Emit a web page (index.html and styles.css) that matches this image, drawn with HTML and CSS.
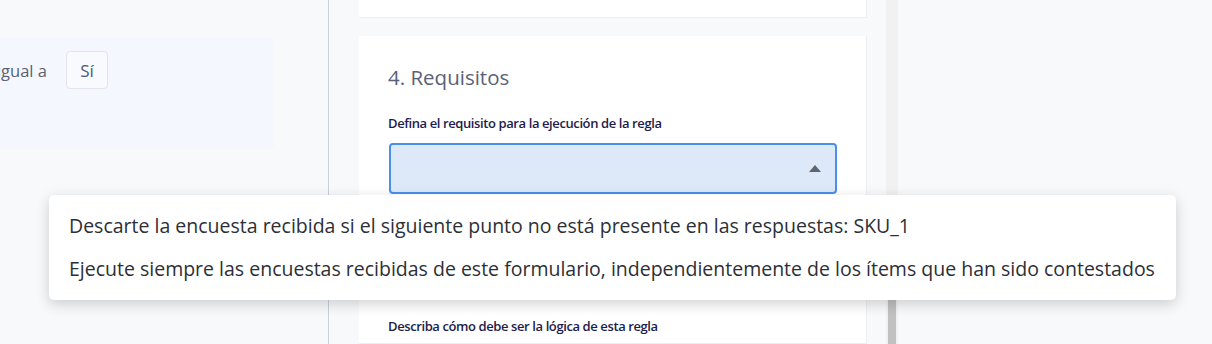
FILE: index.html
```html
<!DOCTYPE html>
<html lang="es">
<head>
<meta charset="utf-8">
<link rel="stylesheet" href="styles.css">
</head>
<body>
<div class="app">
  <aside class="side">
    <div class="cond">
      <div class="cond-row">
        <div class="cond-label"><span>La respuesta es igual a</span></div>
        <div class="chip">Sí</div>
      </div>
    </div>
  </aside>
  <main class="main">
    <section class="card card-prev"></section>
    <section class="card card-req">
      <h2 class="card-title">4. Requisitos</h2>
      <label class="field-label">Defina el requisito para la ejecución de la regla</label>
      <div class="select">
        <svg class="caret" width="12" height="7" viewBox="0 0 12 7"><path d="M0 7 L6 0 L12 7 Z" fill="#5f646d"/></svg>
      </div>
      <div class="spacer"></div>
      <label class="field-label">Describa cómo debe ser la lógica de esta regla</label>
    </section>
  </main>
  <div class="scrollbar"><div class="thumb"></div></div>
  <div class="rest"></div>
</div>
<ul class="menu">
  <li class="menu-item">Descarte la encuesta recibida si el siguiente punto no está presente en las respuestas: SKU_1</li>
  <li class="menu-item">Ejecute siempre las encuestas recibidas de este formulario, independientemente de los ítems que han sido contestados</li>
</ul>
</body>
</html>
```
FILE: styles.css
```css
* { box-sizing: border-box; }
html, body { margin: 0; padding: 0; }
body {
  width: 1212px;
  height: 344px;
  overflow: hidden;
  background: #f8f9fb;
  font-family: "Open Sans", "Noto Sans", sans-serif;
  position: relative;
}
.app {
  display: flex;
  height: 344px;
}
.side {
  width: 329px;
  flex: none;
  border-right: 1px solid #c9d0de;
  background: #f8f9fb;
  padding-top: 37px;
  overflow: hidden;
}
.cond {
  width: 274px;
  height: 112px;
  background: #f4f7fd;
  border-radius: 0 5px 5px 0;
  padding-top: 14px;
}
.cond-row {
  display: flex;
  align-items: center;
  gap: 19px;
}
.cond-label {
  width: 47px;
  display: flex;
  justify-content: flex-end;
  overflow: hidden;
  white-space: nowrap;
  font-size: 16.5px;
  color: #5b6172;
}
.cond-label span { flex: none; }
.chip {
  width: 42px;
  height: 38px;
  border: 1px solid #e1e4ea;
  border-radius: 4px;
  background: #f8fafd;
  display: flex;
  align-items: center;
  justify-content: center;
  font-size: 17px;
  color: #4e5878;
}
.main {
  width: 557px;
  flex: none;
  padding: 0 19px 0 30px;
  display: flex;
  flex-direction: column;
  gap: 18px;
}
.card {
  background: #fff;
  border-right: 1px solid #eceef1;
  border-bottom: 1px solid #eceef1;
}
.card-prev { height: 18px; }
.card-req {
  flex: 1;
  padding: 27px 29px 0 29px;
  display: flex;
  flex-direction: column;
}
.card-title {
  margin: 0;
  font-size: 20.5px;
  font-weight: 400;
  line-height: 28px;
  color: #5a6078;
}
.field-label {
  margin-top: 23px;
  font-size: 13px;
  font-weight: 600;
  letter-spacing: -0.4px;
  line-height: 18px;
  color: #1e1c4c;
}
.select {
  margin-top: 11px;
  margin-left: 1px;
  height: 51px;
  border: 2px solid #4a90e9;
  border-radius: 4px;
  background: #dde9f9;
  display: flex;
  align-items: center;
  justify-content: flex-end;
  padding-right: 14px;
}
.caret { display: block; margin-top: -1px; }
.spacer { height: 123px; }
.card-req .spacer + .field-label { margin-top: 0; }
.scrollbar {
  width: 12px;
  flex: none;
  background: #f1f1f1;
  padding: 250px 2px 0 2px;
}
.thumb {
  height: 100px;
  background: #c1c1c1;
}
.rest { flex: 1; background: #f8f9fb; }
.menu {
  position: absolute;
  left: 49px;
  top: 195px;
  width: 1127px;
  margin: 0;
  padding: 9px 0 10px 0;
  list-style: none;
  background: #fff;
  border-radius: 5px;
  box-shadow: 0 4px 14px rgba(0, 0, 0, 0.18);
}
.menu-item {
  padding: 0 20px;
  height: 43px;
  line-height: 43px;
  font-size: 19.5px;
  color: #2d2f36;
  white-space: nowrap;
}
```
